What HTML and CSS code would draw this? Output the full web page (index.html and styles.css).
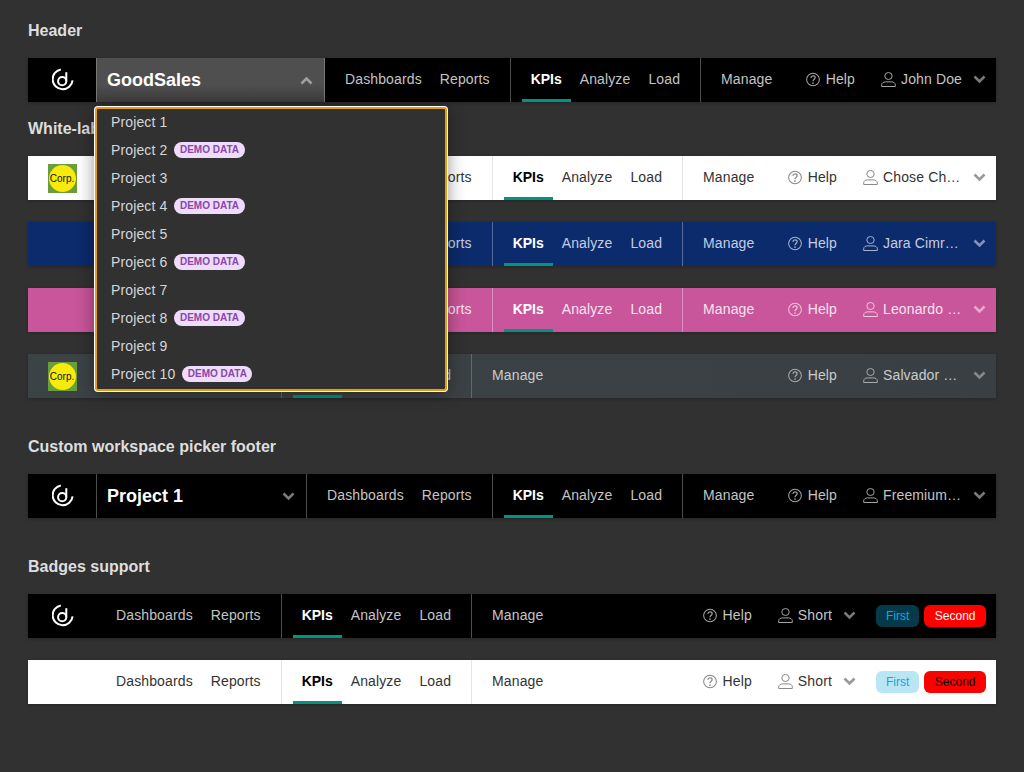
FILE: index.html
```html
<!DOCTYPE html>
<html>
	<head>
		<title>Header</title>
		<link rel="stylesheet" href="styles.css">
	</head>
	<body>
		<svg class="defs" width="0" height="0">
			<symbol id="logo" viewBox="0 0 22 24">
				<path d="M8.8 1.4A10 10 0 1 0 20.6 12.4" fill="none" stroke="currentColor" stroke-width="2"/>
				<circle cx="10.2" cy="13.2" r="4.1" fill="none" stroke="currentColor" stroke-width="2"/>
				<path d="M14.3 13.2V4.2" fill="none" stroke="currentColor" stroke-width="2"/>
			</symbol>
			<symbol id="help" viewBox="0 0 15 15">
				<circle cx="7.5" cy="7.5" r="6.8" fill="none" stroke="currentColor" stroke-width="1.1"/>
				<path d="M5.2 5.8C5.3 4.4 6.2 3.7 7.5 3.7S9.8 4.5 9.8 5.7C9.8 7.2 7.5 7.4 7.5 9.4" fill="none" stroke="currentColor" stroke-width="1.3"/>
				<circle cx="7.5" cy="11.3" r=".9" fill="currentColor"/>
			</symbol>
			<symbol id="user" viewBox="0 0 15 15">
				<ellipse cx="7.5" cy="4" rx="3.7" ry="3.5" fill="none" stroke="currentColor" stroke-width="1"/>
				<path d="M.7 14.5V12.8C.7 11 2.6 9.9 4.3 9.9H10.7C12.4 9.9 14.3 11 14.3 12.8V14.5Z" fill="none" stroke="currentColor" stroke-width="1"/>
			</symbol>
			<symbol id="chevron" viewBox="0 0 13 9">
				<path d="M1.5 1.5L6.5 6.5L11.5 1.5" fill="none" stroke="currentColor" stroke-width="2.6"/>
			</symbol>
		</svg>

		<h2 class="top">Header</h2>
		<div class="header dark">
			<a class="logo"><svg class="gd"><use href="#logo"/></svg></a>
			<div class="picker open">GoodSales<svg class="chev up"><use href="#chevron"/></svg></div>
			<div class="menu"><a>Dashboards</a><a>Reports</a></div>
			<div class="menu"><a class="active">KPIs</a><a>Analyze</a><a>Load</a></div>
			<div class="menu"><a>Manage</a></div>
			<div class="right">
				<a class="help"><svg class="ico"><use href="#help"/></svg>Help</a>
				<a class="user"><svg class="ico"><use href="#user"/></svg><span class="name">John Doe</span><svg class="chev"><use href="#chevron"/></svg></a>
			</div>
		</div>

		<h2 class="wl">White-labeled header</h2>
		<div class="header white">
			<a class="logo"><span class="corp">Corp.</span></a>
			<div class="picker">GoodSales<svg class="chev"><use href="#chevron"/></svg></div>
			<div class="menu"><a>Dashboards</a><a>Reports</a></div>
			<div class="menu"><a class="active">KPIs</a><a>Analyze</a><a>Load</a></div>
			<div class="menu"><a>Manage</a></div>
			<div class="right">
				<a class="help"><svg class="ico"><use href="#help"/></svg>Help</a>
				<a class="user"><svg class="ico"><use href="#user"/></svg><span class="name">Chose Chapman</span><svg class="chev"><use href="#chevron"/></svg></a>
			</div>
		</div>
		<div class="header blue">
			<a class="logo"></a>
			<div class="picker">GoodSales<svg class="chev"><use href="#chevron"/></svg></div>
			<div class="menu"><a>Dashboards</a><a>Reports</a></div>
			<div class="menu"><a class="active">KPIs</a><a>Analyze</a><a>Load</a></div>
			<div class="menu"><a>Manage</a></div>
			<div class="right">
				<a class="help"><svg class="ico"><use href="#help"/></svg>Help</a>
				<a class="user"><svg class="ico"><use href="#user"/></svg><span class="name">Jara Cimrman</span><svg class="chev"><use href="#chevron"/></svg></a>
			</div>
		</div>
		<div class="header pink">
			<a class="logo"></a>
			<div class="picker">GoodSales<svg class="chev"><use href="#chevron"/></svg></div>
			<div class="menu"><a>Dashboards</a><a>Reports</a></div>
			<div class="menu"><a class="active">KPIs</a><a>Analyze</a><a>Load</a></div>
			<div class="menu"><a>Manage</a></div>
			<div class="right">
				<a class="help"><svg class="ico"><use href="#help"/></svg>Help</a>
				<a class="user"><svg class="ico"><use href="#user"/></svg><span class="name">Leonardo da Vinci</span><svg class="chev"><use href="#chevron"/></svg></a>
			</div>
		</div>
		<div class="header slate">
			<a class="logo"><span class="corp">Corp.</span></a>
			<div class="menu"><a>Dashboards</a><a>Reports</a></div>
			<div class="menu"><a class="active">KPIs</a><a>Analyze</a><a>Load</a></div>
			<div class="menu"><a>Manage</a></div>
			<div class="right">
				<a class="help"><svg class="ico"><use href="#help"/></svg>Help</a>
				<a class="user"><svg class="ico"><use href="#user"/></svg><span class="name">Salvador Dali Domenech</span><svg class="chev"><use href="#chevron"/></svg></a>
			</div>
		</div>

		<h2>Custom workspace picker footer</h2>
		<div class="header dark">
			<a class="logo"><svg class="gd"><use href="#logo"/></svg></a>
			<div class="picker">Project 1<svg class="chev"><use href="#chevron"/></svg></div>
			<div class="menu"><a>Dashboards</a><a>Reports</a></div>
			<div class="menu"><a class="active">KPIs</a><a>Analyze</a><a>Load</a></div>
			<div class="menu"><a>Manage</a></div>
			<div class="right">
				<a class="help"><svg class="ico"><use href="#help"/></svg>Help</a>
				<a class="user"><svg class="ico"><use href="#user"/></svg><span class="name">Freemium User</span><svg class="chev"><use href="#chevron"/></svg></a>
			</div>
		</div>

		<h2>Badges support</h2>
		<div class="header dark">
			<a class="logo"><svg class="gd"><use href="#logo"/></svg></a>
			<div class="menu"><a>Dashboards</a><a>Reports</a></div>
			<div class="menu"><a class="active">KPIs</a><a>Analyze</a><a>Load</a></div>
			<div class="menu"><a>Manage</a></div>
			<div class="right">
				<a class="help"><svg class="ico"><use href="#help"/></svg>Help</a>
				<a class="user"><svg class="ico"><use href="#user"/></svg><span class="name">Short</span><svg class="chev"><use href="#chevron"/></svg></a>
				<div class="badges"><span class="badge first">First</span><span class="badge second">Second</span></div>
			</div>
		</div>
		<div class="header white">
			<a class="logo"></a>
			<div class="menu"><a>Dashboards</a><a>Reports</a></div>
			<div class="menu"><a class="active">KPIs</a><a>Analyze</a><a>Load</a></div>
			<div class="menu"><a>Manage</a></div>
			<div class="right">
				<a class="help"><svg class="ico"><use href="#help"/></svg>Help</a>
				<a class="user"><svg class="ico"><use href="#user"/></svg><span class="name">Short</span><svg class="chev"><use href="#chevron"/></svg></a>
				<div class="badges"><span class="badge first">First</span><span class="badge second">Second</span></div>
			</div>
		</div>

		<div class="dropdown">
			<div class="item">Project 1</div>
			<div class="item">Project 2<span class="demo">DEMO DATA</span></div>
			<div class="item">Project 3</div>
			<div class="item">Project 4<span class="demo">DEMO DATA</span></div>
			<div class="item">Project 5</div>
			<div class="item">Project 6<span class="demo">DEMO DATA</span></div>
			<div class="item">Project 7</div>
			<div class="item">Project 8<span class="demo">DEMO DATA</span></div>
			<div class="item">Project 9</div>
			<div class="item">Project 10<span class="demo">DEMO DATA</span></div>
		</div>
	</body>
</html>
```

FILE: styles.css
```css
html, body {
	margin: 0;
	height: 100%;
}
body {
	background: #313131;
	padding: 0 28px;
	box-sizing: border-box;
	font-family: "Liberation Sans", Arial, sans-serif;
	font-size: 14px;
	letter-spacing: .13px;
	overflow: hidden;
	position: relative;
}
.defs {
	position: absolute;
}
h2 {
	margin: 39px 0 17px;
	line-height: 20px;
	font-size: 16px;
	font-weight: bold;
	letter-spacing: 0;
	color: #dedede;
}
h2.top {
	margin-top: 0;
	padding-top: 21px;
}
h2.wl {
	margin-top: 17px;
}

.header {
	display: flex;
	align-items: stretch;
	height: 44px;
	box-shadow: 0 1px 3px rgba(0, 0, 0, .25);
	--text: #c4c4c4;
	--strong: #fff;
	--line: #4d4d4d;
	--icon: #a3a3a3;
	--chev: #7a7a7a;
}
.header + .header {
	margin-top: 22px;
}
.dark {
	background: #000;
}
.white {
	background: #fff;
	--text: #333;
	--strong: #000;
	--line: #e6e6e6;
	--icon: #888;
	--chev: #999;
}
.blue {
	background: #0b2b6c;
	--text: #c6cde0;
	--line: #55699a;
	--icon: #a6b1cc;
	--chev: #8592b4;
}
.pink {
	background: #c9559a;
	--text: #f7e3ef;
	--line: #dc8fc0;
	--icon: #efc6de;
	--chev: #e6a9cd;
}
.slate {
	background: linear-gradient(to right, #3b4347, #3a3f43);
	--text: #c9cbcc;
	--line: #63686b;
	--icon: #a8aaac;
	--chev: #85898c;
}

.logo {
	flex: none;
	width: 68px;
	display: flex;
	align-items: center;
	justify-content: center;
	color: #fff;
}
.gd {
	width: 22px;
	height: 24px;
	margin-left: 1px;
}
.corp {
	width: 29px;
	height: 29px;
	background: #6a9e3a;
	position: relative;
	display: flex;
	align-items: center;
	justify-content: center;
	font-size: 10px;
	letter-spacing: 0;
	color: #111;
	z-index: 0;
}
.corp::before {
	content: "";
	position: absolute;
	inset: 1px;
	border-radius: 50%;
	background: #f7ea0c;
	z-index: -1;
}

.picker {
	flex: none;
	width: 210px;
	box-sizing: border-box;
	display: flex;
	align-items: center;
	justify-content: space-between;
	padding: 0 11px 0 10px;
	border-left: 1px solid var(--line);
	font-size: 18px;
	font-weight: bold;
	color: var(--strong);
	letter-spacing: 0;
}
.picker.open {
	width: 228px;
	background: linear-gradient(to bottom, #4f4f4f, #4f4f4f 60%, #3e3e3e);
	border-left-color: #777;
}
.picker.open .chev {
	color: #a0a0a0;
}
.picker.open + .menu {
	border-left-color: #777;
}

.menu {
	flex: none;
	display: flex;
	padding: 0 11px;
	border-left: 1px solid var(--line);
}
.menu a {
	padding: 0 9px;
	line-height: 43px;
	height: 44px;
	box-sizing: border-box;
	color: var(--text);
}
.menu .active {
	color: var(--strong);
	font-weight: bold;
	letter-spacing: -.05px;
	border-bottom: 3px solid #00957e;
}
.logo + .menu {
	border-left: 0;
}

.right {
	margin-left: auto;
	display: flex;
	align-items: center;
	color: var(--text);
	padding-right: 10px;
}
.help, .user {
	display: flex;
	align-items: center;
	height: 42px;
	align-self: flex-start;
}
.help {
	margin-right: 26px;
}
.ico {
	width: 15px;
	height: 15px;
	margin-top: 1px;
	margin-right: 5px;
	color: var(--icon);
	flex: none;
}
.help .ico {
	width: 14px;
	margin-right: 6px;
}
.name {
	max-width: 79px;
	overflow: hidden;
	white-space: nowrap;
	text-overflow: ellipsis;
}
.chev {
	width: 13px;
	height: 9px;
	margin-left: 11px;
	margin-top: 1px;
	color: var(--chev);
	flex: none;
}
.picker .chev {
	margin: 0;
}
.chev.up {
	transform: rotate(180deg);
}

.badges {
	display: flex;
	gap: 5px;
	margin-left: 20px;
}
.badge {
	height: 22px;
	line-height: 22px;
	padding: 0 10px;
	border-radius: 6px;
	font-size: 12px;
	letter-spacing: 0;
}
.first {
	background: #b8e6f5;
	color: #14a7d6;
}
.dark .first {
	background: #053a4d;
}
.second {
	padding: 0 10.5px;
	background: #f00;
	color: #000;
}
.dark .second {
	color: #fff;
}

.dropdown {
	position: absolute;
	left: 95px;
	top: 107px;
	width: 352px;
	box-sizing: border-box;
	background: #313131;
	border: 2px solid #e99c0c;
	border-radius: 3px;
	box-shadow: 0 0 0 1px #fff, 0 2px 18px rgba(0, 0, 0, .45);
}
.item {
	height: 28px;
	padding-left: 14px;
	padding-bottom: 3px;
	box-sizing: border-box;
	color: #d6d6d6;
	display: flex;
	align-items: center;
}
.demo {
	margin-left: 7px;
	height: 16px;
	line-height: 16px;
	padding: 0 5.5px;
	border-radius: 8px;
	background: #efdcfb;
	color: #8648a8;
	font-size: 10px;
	font-weight: bold;
	letter-spacing: 0;
}
```
